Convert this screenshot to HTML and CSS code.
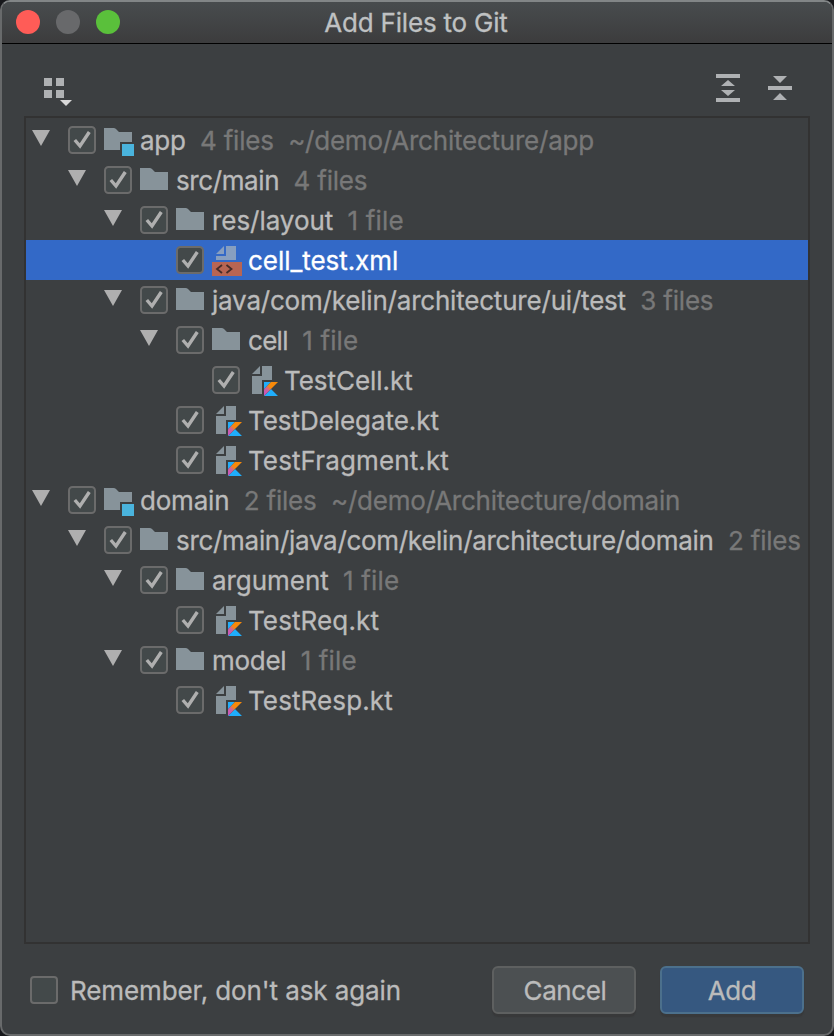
FILE: index.html
```html
<!DOCTYPE html>
<html lang="en">
<head>
<meta charset="utf-8">
<title>Add Files to Git</title>
<link rel="stylesheet" href="styles.css">
</head>
<body>
<svg class="defs" width="0" height="0" aria-hidden="true">
  <defs>
    <linearGradient id="kt-band" x1="16" y1="32" x2="30" y2="18" gradientUnits="userSpaceOnUse">
      <stop offset="0.1" stop-color="#c757bc"/><stop offset="0.35" stop-color="#d0609a"/><stop offset="0.55" stop-color="#f88909"/><stop offset="1" stop-color="#f88909"/>
    </linearGradient>
    <symbol id="arrow" viewBox="0 0 18 16"><path d="M0 0H18L9 16Z" fill="#afafaf"/></symbol>
    <symbol id="check" viewBox="0 0 28 28"><rect x="1" y="1" width="26" height="26" rx="3.5" fill="#43494a" stroke="#6b6b6b" stroke-width="2"/><path d="M6.800 14L12 20L21.300 6" fill="none" stroke="#afafaf" stroke-width="3.4"/></symbol>
    <symbol id="folder" viewBox="0 0 32 32"><path d="M0 4H9.5Q11 4 12 5L15 8H28V26H0Z" fill="#87939a"/></symbol>
    <symbol id="module" viewBox="0 0 32 32"><path d="M0 4H9.5Q11 4 12 5L15 8H28V18H16V26H0Z" fill="#87939a"/><rect x="18" y="20" width="12" height="12" fill="#4ab4dd"/></symbol>
    <symbol id="kotlin" viewBox="0 0 32 32"><path d="M12 2V10H4Z M14 2H24V16H14V30H4V12H14Z" fill="#87939a"/><path d="M16 18H23L16 25.3Z M16 32L23 25L30 32Z" fill="#20aefc"/><path d="M23 18H30L16 32V25.3Z" fill="url(#kt-band)"/></symbol>
    <symbol id="xml" viewBox="0 0 32 32"><path d="M12 2V10H4Z M14 2H24V16H4V12H14Z" fill="#879fc0"/><rect y="18" width="30" height="14" fill="#b86553"/><path d="M10 21L5 25L10 29M14.500 21L19.500 25L14.500 29" fill="none" stroke="#452b28" stroke-width="1.8"/></symbol>
  </defs>
</svg>
<div class="window">
  <header class="titlebar">
    <div class="lights"><i class="light close"></i><i class="light minimize"></i><i class="light maximize"></i></div>
    <h1 class="title">Add Files to Git</h1>
  </header>
  <div class="toolbar">
    <svg class="tool group" width="32" height="32" viewBox="0 0 32 32"><path d="M2 4h8v8H2zM14 4h8v8h-8zM2 16h8v8H2zM14 16h8v8h-8z" fill="#afb1b3"/><path d="M18 26H30L24 32Z" fill="#d8d8d8"/></svg>
    <span class="spacer"></span>
    <svg class="tool" width="32" height="32" viewBox="0 0 32 32"><path d="M4 2h24v4H4zM4 26h24v4H4zM9 14L16 8L23 14ZM9 18H23L16 24Z" fill="#afb1b3"/></svg>
    <svg class="tool" width="32" height="32" viewBox="0 0 32 32"><path d="M4 14h24v4H4zM9 4H23L16 11ZM9 28H23L16 21Z" fill="#afb1b3"/></svg>
  </div>
  <main class="tree">
    <div class="row"><svg class="arrow"><use href="#arrow"/></svg><svg class="check"><use href="#check"/></svg><svg class="icon"><use href="#module"/></svg><span class="name">app</span><span class="meta">4 files</span><span class="meta path">~/demo/Architecture/app</span></div>
    <div class="row l1"><svg class="arrow"><use href="#arrow"/></svg><svg class="check"><use href="#check"/></svg><svg class="icon"><use href="#folder"/></svg><span class="name tight">src/main</span><span class="meta">4 files</span></div>
    <div class="row l2"><svg class="arrow"><use href="#arrow"/></svg><svg class="check"><use href="#check"/></svg><svg class="icon"><use href="#folder"/></svg><span class="name normal">res/layout</span><span class="meta single">1 file</span></div>
    <div class="row l3 selected"><svg class="arrow"></svg><svg class="check"><use href="#check"/></svg><svg class="icon"><use href="#xml"/></svg><span class="name normal">cell_test.xml</span></div>
    <div class="row l2"><svg class="arrow"><use href="#arrow"/></svg><svg class="check"><use href="#check"/></svg><svg class="icon"><use href="#folder"/></svg><span class="name snug">java/com/kelin/architecture/ui/test</span><span class="meta">3 files</span></div>
    <div class="row l3"><svg class="arrow"><use href="#arrow"/></svg><svg class="check"><use href="#check"/></svg><svg class="icon"><use href="#folder"/></svg><span class="name tighter">cell</span><span class="meta single">1 file</span></div>
    <div class="row l4"><svg class="arrow"></svg><svg class="check"><use href="#check"/></svg><svg class="icon"><use href="#kotlin"/></svg><span class="name normal">TestCell.kt</span></div>
    <div class="row l3"><svg class="arrow"></svg><svg class="check"><use href="#check"/></svg><svg class="icon"><use href="#kotlin"/></svg><span class="name normal">TestDelegate.kt</span></div>
    <div class="row l3"><svg class="arrow"></svg><svg class="check"><use href="#check"/></svg><svg class="icon"><use href="#kotlin"/></svg><span class="name wide">TestFragment.kt</span></div>
    <div class="row"><svg class="arrow"><use href="#arrow"/></svg><svg class="check"><use href="#check"/></svg><svg class="icon"><use href="#module"/></svg><span class="name snug">domain</span><span class="meta">2 files</span><span class="meta path">~/demo/Architecture/domain</span></div>
    <div class="row l1"><svg class="arrow"><use href="#arrow"/></svg><svg class="check"><use href="#check"/></svg><svg class="icon"><use href="#folder"/></svg><span class="name">src/main/java/com/kelin/architecture/domain</span><span class="meta">2 files</span></div>
    <div class="row l2"><svg class="arrow"><use href="#arrow"/></svg><svg class="check"><use href="#check"/></svg><svg class="icon"><use href="#folder"/></svg><span class="name normal">argument</span><span class="meta single">1 file</span></div>
    <div class="row l3"><svg class="arrow"></svg><svg class="check"><use href="#check"/></svg><svg class="icon"><use href="#kotlin"/></svg><span class="name wide">TestReq.kt</span></div>
    <div class="row l2"><svg class="arrow"><use href="#arrow"/></svg><svg class="check"><use href="#check"/></svg><svg class="icon"><use href="#folder"/></svg><span class="name">model</span><span class="meta single">1 file</span></div>
    <div class="row l3"><svg class="arrow"></svg><svg class="check"><use href="#check"/></svg><svg class="icon"><use href="#kotlin"/></svg><span class="name wide">TestResp.kt</span></div>
  </main>
  <footer class="footer">
    <span class="box"></span>
    <span class="remember">Remember, don't ask again</span>
    <button class="button cancel">Cancel</button>
    <button class="button primary">Add</button>
  </footer>
</div>
</body>
</html>
```
FILE: styles.css
```css
* { box-sizing: border-box; }
body {
  margin: 0;
  background: #17181b;
  font-family: Inter, "Liberation Sans", sans-serif;
  font-size: 26px;
  color: #bbbbbb;
  -webkit-text-stroke: 0.3px currentColor;
}
.defs { position: absolute; }
.window {
  width: 834px;
  height: 1036px;
  display: flex;
  flex-direction: column;
  border: 2px solid #686a6b;
  border-top-color: #828687;
  border-radius: 10px;
  background: #3c3f41;
  overflow: hidden;
}
.titlebar {
  flex: none;
  height: 42px;
  display: grid;
  grid-template-columns: 1fr auto 1fr;
  align-items: center;
  background: linear-gradient(#484c4e, #3c3c3d);
  border-bottom: 1px solid #000;
}
.lights { display: flex; gap: 16px; padding: 0 0 1px 14px; }
.light { width: 24px; height: 24px; border-radius: 50%; }
.close { background: #ff5c57; }
.minimize { background: #68696b; }
.maximize { background: #5ac03b; }
.title {
  margin: 0 2px 0 0;
  font-size: 26px;
  line-height: 40px;
  font-weight: 400;
  letter-spacing: -0.2px;
  color: #bfc1c2;
}
.toolbar { flex: none; height: 72px; display: flex; gap: 20px; padding: 28px 36px 0 40px; }
.group { margin-top: 2px; }
.spacer { flex: 1; }
.tree {
  flex: none;
  height: 828px;
  margin: 0 22px;
  padding-top: 2px;
  border: 2px solid #323232;
}
.row {
  height: 40px;
  display: flex;
  align-items: center;
  padding-left: 6px;
  white-space: nowrap;
}
.l1 { padding-left: 42px; }
.l2 { padding-left: 78px; }
.l3 { padding-left: 114px; }
.l4 { padding-left: 150px; }
.arrow { flex: none; width: 18px; height: 16px; margin: 0 18px 4px 0; }
.check { flex: none; width: 28px; height: 28px; margin-right: 8px; }
.icon { flex: none; width: 32px; height: 32px; margin-right: 4px; }
.name, .meta { line-height: 40px; letter-spacing: -0.3px; padding-top: 2px; }
.tighter { letter-spacing: -0.7px; }
.tight { letter-spacing: -0.4px; }
.snug { letter-spacing: -0.2px; }
.normal { letter-spacing: -0.05px; }
.wide { letter-spacing: 0.12px; }
.meta { color: #787878; margin-left: 14.4px; letter-spacing: -0.2px; }
.path { letter-spacing: -0.23px; }
.single { letter-spacing: 0.15px; }
.selected { background: #3369c7; color: #fff; }
.footer { display: flex; align-items: center; height: 48px; margin: 22px 28px 0; }
.box { width: 28px; height: 28px; border: 2px solid #6b6b6b; border-radius: 4px; background: #43494a; margin-right: 12px; }
.remember { flex: 1; line-height: 40px; letter-spacing: -0.1px; padding-top: 1px; }
.button {
  width: 144px;
  height: 48px;
  padding: 1px 0 0;
  border: 2px solid #5e6060;
  border-radius: 6px;
  background: #4c5052;
  color: #bbbbbb;
  font: inherit;
  letter-spacing: -0.4px;
  box-shadow: 0 3px 1px #38393a;
}
.cancel { margin-right: 24px; padding-left: 2px; }
.primary { border-color: #4c708c; background: #365880; }
```
